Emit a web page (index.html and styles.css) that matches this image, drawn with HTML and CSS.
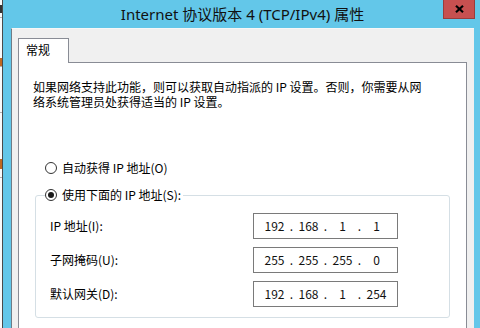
FILE: index.html
```html
<!DOCTYPE html>
<html lang="zh-CN">
<head>
<meta charset="utf-8">
<title>Internet 协议版本 4 (TCP/IPv4) 属性</title>
<link rel="stylesheet" href="styles.css">
</head>
<body>
<div class="screen">
  <div class="behind">
    <div class="bh s1"><span class="frag dark"></span></div>
    <div class="bh s2"><span class="frag orange"></span></div>
    <div class="bh s3"></div>
    <div class="bh s4"><span class="frag orange low"></span></div>
    <div class="bh s5"></div>
  </div>
  <div class="window">
    <div class="titlebar"><span class="title">Internet 协议版本 4 (TCP/IPv4) 属性</span></div>
    <div class="close" aria-label="关闭">
      <svg width="9" height="8" viewBox="0 0 9 8"><path d="M1 0.8 L8 7.2 M8 0.8 L1 7.2" stroke="#000" stroke-width="2.2" fill="none"/></svg>
    </div>
    <div class="client">
      <div class="tabs"><div class="tab">常规</div></div>
      <div class="page">
        <p class="desc">如果网络支持此功能，则可以获取自动指派的 IP 设置。否则，你需要从网<br>络系统管理员处获得适当的 IP 设置。</p>
        <div class="radio first"><span class="circle"></span><span>自动获得 IP 地址(O)</span></div>
        <fieldset class="group">
          <legend><div class="radio"><span class="circle checked"></span><span>使用下面的 IP 地址(S):</span></div></legend>
          <div class="grid">
            <span class="lbl">IP 地址(I):</span>
            <div class="ipbox"><span class="oct">192</span><span class="sep">.</span><span class="oct">168</span><span class="sep">.</span><span class="oct">1</span><span class="sep">.</span><span class="oct">1</span></div>
            <span class="lbl">子网掩码(U):</span>
            <div class="ipbox"><span class="oct">255</span><span class="sep">.</span><span class="oct">255</span><span class="sep">.</span><span class="oct">255</span><span class="sep">.</span><span class="oct">0</span></div>
            <span class="lbl">默认网关(D):</span>
            <div class="ipbox"><span class="oct">192</span><span class="sep">.</span><span class="oct">168</span><span class="sep">.</span><span class="oct">1</span><span class="sep">.</span><span class="oct">254</span></div>
          </div>
        </fieldset>
      </div>
    </div>
  </div>
</div>
</body>
</html>
```
FILE: styles.css
```css
html, body {
  margin: 0;
  padding: 0;
}
body {
  width: 480px;
  height: 328px;
  overflow: hidden;
  font-family: "Noto Sans CJK SC", sans-serif;
  font-size: 12px;
  color: #000;
  background: #fff;
}
.screen {
  display: flex;
  height: 328px;
}
.behind {
  width: 2px;
  border-right: 1px solid #4a4a4a;
  background: #fafafa;
  display: flex;
  flex-direction: column;
  overflow: hidden;
}
.bh {
  border-bottom: 1px solid #b0b0b0;
  position: relative;
}
.s1 { height: 17px; }
.s2 { height: 48px; }
.s3 { height: 45px; }
.s4 { height: 64px; }
.s5 { flex: 1; border-bottom: none; }
.frag {
  display: block;
  width: 2px;
  height: 8px;
  margin-top: 5px;
}
.frag.dark { background: #333; }
.frag.orange { background: #c06820; margin-top: 40px; }
.frag.orange.low { margin-top: 46px; height: 10px; }

.window {
  flex: 1;
  position: relative;
  background: #63c7e9;
  display: flex;
  flex-direction: column;
  padding: 0 6px 0 8px;
}
.titlebar {
  height: 28px;
  display: flex;
  align-items: center;
  justify-content: center;
  font-family: "Noto Sans", "Noto Sans CJK SC", sans-serif;
  font-size: 15px;
  color: #111;
}
.title {
  line-height: 20px;
}
.close {
  position: absolute;
  top: 0;
  right: 5px;
  width: 32px;
  height: 19px;
  box-sizing: border-box;
  background: #c75050;
  border: 1px solid #9a3c3c;
  border-top: none;
  display: flex;
  align-items: center;
  justify-content: center;
}
.client {
  flex: 1;
  background: #f0f0f0;
  border-left: 1px solid #6f7c86;
  border-top: 1px solid #f7f7f7;
  padding: 9px 7px 0 6px;
  display: flex;
  flex-direction: column;
}
.tabs {
  display: flex;
  height: 24px;
}
.tab {
  box-sizing: border-box;
  width: 51px;
  height: 25px;
  margin-bottom: -1px;
  position: relative;
  z-index: 1;
  background: #fff;
  border: 1px solid #898c95;
  border-bottom: none;
  padding-left: 7px;
  line-height: 22px;
}
.page {
  flex: 1;
  background: #fff;
  border: 1px solid #898c95;
  border-bottom: none;
  padding: 16px 14px 0 14px;
}
.desc {
  margin: 0;
  line-height: 15px;
  white-space: nowrap;
}
.radio {
  display: flex;
  align-items: center;
  height: 16px;
  line-height: 16px;
  gap: 5px;
}
.radio.first {
  margin: 51px 0 0 12px;
}
.circle {
  box-sizing: border-box;
  width: 12px;
  height: 12px;
  border-radius: 50%;
  border: 1px solid #333;
  background: #fff;
  flex: none;
  display: flex;
  align-items: center;
  justify-content: center;
}
.circle.checked::after {
  content: "";
  width: 6px;
  height: 6px;
  border-radius: 50%;
  background: #1a1a1a;
}
.group {
  margin: 11px 2px 0 2px;
  padding: 10px 14px 10px 14px;
  border: 1px solid #d5dfe5;
  border-radius: 3px;
  min-width: 0;
}
.group legend {
  padding: 0 2px 0 0;
  margin-left: -5px;
}
.grid {
  display: grid;
  grid-template-columns: 203px 145px;
  grid-auto-rows: 26px;
  row-gap: 8px;
  align-items: center;
}
.lbl {
  line-height: 16px;
}
.ipbox {
  box-sizing: border-box;
  height: 26px;
  width: 145px;
  border: 1px solid #7a7a7a;
  padding-left: 7px;
  display: flex;
  align-items: center;
  line-height: 16px;
  color: #111;
}
.oct {
  width: 27px;
  text-align: center;
}
.sep {
  width: 7px;
  text-align: center;
}
```
